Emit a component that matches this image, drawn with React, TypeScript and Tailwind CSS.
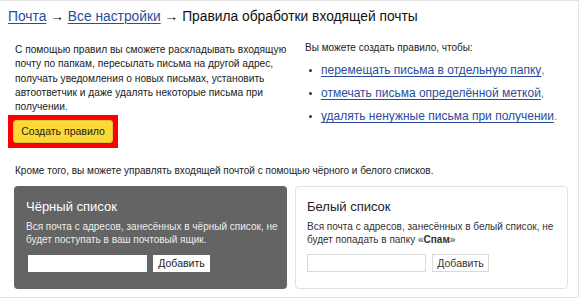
import React from "react";

const font = { fontFamily: '"Liberation Sans", Arial, sans-serif' };

export default function App() {
  return (
    <div
      className="w-[580px] h-[300px] bg-white overflow-hidden text-[#222]"
      style={font}
    >
      <div className="w-[579px] h-[298px] border-t border-r border-b border-[#e3e3e3] flex flex-col">
        <div className="pl-[8px] pt-[6px] text-[13.8px] leading-[20px] text-[#111]">
          <a className="text-[#2a4d9c] underline underline-offset-2 decoration-1">Почта</a>
          <span> → </span>
          <a className="text-[#2a4d9c] underline underline-offset-2 decoration-1">Все настройки</a>
          <span> → Правила обработки входящей почты</span>
        </div>

        <div className="flex mt-[16px] h-[114px]">
          <div className="w-[290px] pl-[8px] flex flex-col shrink-0">
            <p className="pl-[7px] w-[285px] text-[10.2px] leading-[14.3px] text-[#1a1a1a]">
              С помощью правил вы сможете раскладывать входящую почту по папкам, пересылать письма на другой адрес, получать уведомления о новых письмах, установить автоответчик и даже удалять некоторые письма при получении.
            </p>
            <div className="mt-[1px] w-[110px] h-[33px] bg-[#ff0000] flex items-center justify-center">
              <button className="w-[100px] h-[23px] bg-[#fdd938] border border-[#e7c12b] rounded-[3px] text-[10.5px] text-[#222] shadow-[0_1px_1px_rgba(0,0,0,0.15)]">
                Создать правило
              </button>
            </div>
          </div>

          <div className="pl-[15px] -mt-[2px] flex flex-col">
            <div className="text-[10px] leading-[14px] text-[#222]">
              Вы можете создать правило, чтобы:
            </div>
            <ul className="mt-[6px] flex flex-col gap-[5px]">
              {[
                ["перемещать письма в отдельную папку", ","],
                ["отмечать письма определённой меткой", ","],
                ["удалять ненужные письма при получении", "."],
              ].map(([t, p]) => (
                <li key={t} className="flex items-center h-[18px] text-[12px] leading-[18px]">
                  <span className="w-[3px] h-[3px] rounded-full bg-[#333] ml-[4px] mr-[9px]" />
                  <a className="text-[#2a4d9c] underline underline-offset-2 decoration-1">{t}</a>
                  <span className="text-[#888]">{p}</span>
                </li>
              ))}
            </ul>
          </div>
        </div>

        <div className="pl-[15px] mt-[7px] text-[10px] leading-[14px] text-[#222]">
          Кроме того, вы можете управлять входящей почтой с помощью чёрного и белого списков.
        </div>

        <div className="flex gap-[8px] pl-[14px] mt-[8px]">
          <div className="w-[273px] h-[103px] rounded-[4px] bg-[#646464] pl-[12px] pr-[6px] pt-[12px]">
            <div className="text-[13px] leading-[18px] text-white">Чёрный список</div>
            <div className="mt-[5px] text-[10px] leading-[12.5px] text-[#ececec]">
              Вся почта с адресов, занесённых в чёрный список, не будет поступать в ваш почтовый ящик.
            </div>
            <div className="flex gap-[6px] mt-[9px] pl-[2px]">
              <div className="w-[119px] h-[17px] bg-white" />
              <button className="w-[57px] h-[17px] bg-white text-[10.5px] leading-[15px] text-[#222]">
                Добавить
              </button>
            </div>
          </div>

          <div className="w-[273px] h-[103px] rounded-[4px] border border-[#e2e2e2] pl-[11px] pr-[6px] pt-[11px]">
            <div className="text-[13px] leading-[18px] text-[#222]">Белый список</div>
            <div className="mt-[5px] text-[10px] leading-[12.5px] text-[#333]">
              Вся почта с адресов, занесённых в белый список, не будет попадать в папку «<b>Спам</b>»
            </div>
            <div className="flex gap-[6px] mt-[8px]">
              <div className="w-[119px] h-[18px] border border-[#d9d9d9]" />
              <button className="w-[57px] h-[18px] border border-[#d9d9d9] text-[10.5px] leading-[15px] text-[#333]">
                Добавить
              </button>
            </div>
          </div>
        </div>
      </div>
    </div>
  );
}
